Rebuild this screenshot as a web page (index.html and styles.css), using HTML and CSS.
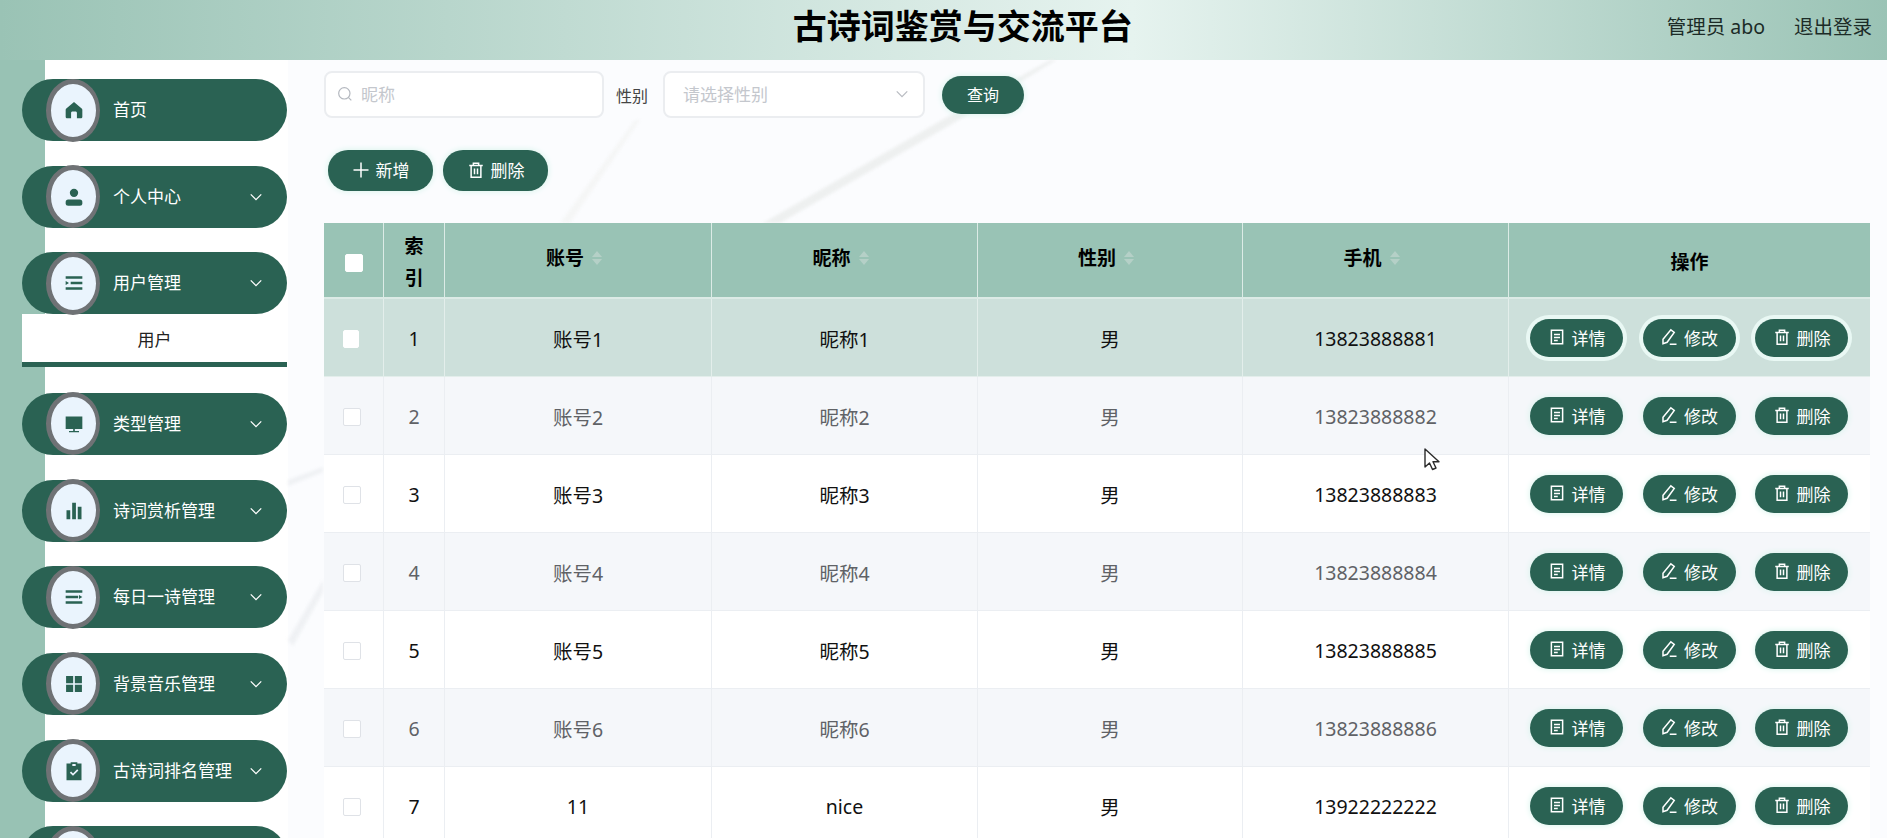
FILE: index.html
```html
<!DOCTYPE html>
<html lang="zh-CN">

<head>
    <meta charset="UTF-8">
    <title>古诗词鉴赏与交流平台</title>
    <link rel="stylesheet" href="styles.css">
</head>

<body>
    <svg class="icon-defs" xmlns="http://www.w3.org/2000/svg">
        <symbol id="i-home" viewBox="0 0 24 24"><path d="M12 2.500 2.800 10.200c-.5.4-.8 1-.8 1.700V20c0 1.100.9 2 2 2h4.500v-6.500c0-1 .7-1.700 1.700-1.700h3.600c1 0 1.700.7 1.700 1.700V22H20c1.100 0 2-.9 2-2v-8.100c0-.7-.3-1.300-.8-1.700z"/></symbol>
        <symbol id="i-user" viewBox="0 0 24 24"><circle cx="12" cy="7" r="5"/><rect x="2" y="15" width="20" height="7.500" rx="3"/></symbol>
        <symbol id="i-indent" viewBox="0 0 24 24"><path d="M2 4h20v3H2zM8 10.500h14v3H8zM2 17h20v3H2zM6 12 2 9.500v5z"/></symbol>
        <symbol id="i-monitor" viewBox="0 0 24 24"><path d="M2 3h20v15H2zM11 18h2v2.500h-2zM6 20.500h12V22H6z"/></symbol>
        <symbol id="i-chart" viewBox="0 0 24 24"><path d="M3 11h4.500v11H3zM9.800 2h4.500v20H9.800zM16.500 7H21v15h-4.500z"/></symbol>
        <symbol id="i-outdent" viewBox="0 0 24 24"><path d="M2 4h20v3H2zM2 10.500h15v3H2zM2 17h20v3H2zM18 9.500l4 2.500-4 2.500z"/></symbol>
        <symbol id="i-grid" viewBox="0 0 24 24"><path d="M2.500 2.500h8.500V11H2.500zM13 2.500h8.500V11H13zM2.500 13H11v8.500H2.500zM13 13h8.500v8.500H13z"/></symbol>
        <symbol id="i-task" viewBox="0 0 24 24"><path d="M8 1.500h8V3h5v20H3V3h5zM10 3.500V6h4V3.500zM10.800 17.800l6.500-6.500-1.500-1.400-5 5-2.300-2.300-1.500 1.400z"/></symbol>
        <symbol id="i-doc" viewBox="0 0 24 24"><path d="M4.500 3h15v18h-15zM8 8.500h8M8 12.500h8M8 16.500h5" fill="none" stroke="currentColor" stroke-width="2"/></symbol>
        <symbol id="i-edit" viewBox="0 0 24 24"><path d="M14.500 2.500l4.500 3.500L9.500 19l-5.500 2L4 15zM13 21.500h9" fill="none" stroke="currentColor" stroke-width="2"/></symbol>
        <symbol id="i-trash" viewBox="0 0 24 24"><path d="M3 6h18M8.500 6V3h7v3M5.500 6v15.500h13V6M10 10v7.500M14 10v7.500" fill="none" stroke="currentColor" stroke-width="2"/></symbol>
        <symbol id="i-plus" viewBox="0 0 24 24"><path d="M12 2v20M2 12h20" fill="none" stroke="currentColor" stroke-width="2"/></symbol>
        <symbol id="i-down" viewBox="0 0 24 24"><path d="M3 7.500l9 9 9-9" fill="none" stroke="currentColor" stroke-width="2.200"/></symbol>
        <symbol id="i-search" viewBox="0 0 24 24"><circle cx="11" cy="11" r="8.500" fill="none" stroke="currentColor" stroke-width="1.800"/><path d="M17 17l4.500 4.500" fill="none" stroke="currentColor" stroke-width="1.800"/></symbol>
    </svg>

    <header class="topbar">
        <h1 class="site-title">古诗词鉴赏与交流平台</h1>
        <div class="user-box">
            <span>管理员 abo</span>
            <span>退出登录</span>
        </div>
    </header>

    <div class="layout">
        <aside class="sidebar">
            <div class="menu-item">
                <span class="menu-circle"><svg class="menu-icon"><use href="#i-home"/></svg></span>
                <span class="menu-label">首页</span>
            </div>
            <div class="menu-item">
                <span class="menu-circle"><svg class="menu-icon"><use href="#i-user"/></svg></span>
                <span class="menu-label">个人中心</span>
                <svg class="menu-arrow"><use href="#i-down"/></svg>
            </div>
            <div class="menu-item open">
                <span class="menu-circle"><svg class="menu-icon"><use href="#i-indent"/></svg></span>
                <span class="menu-label">用户管理</span>
                <svg class="menu-arrow"><use href="#i-down"/></svg>
            </div>
            <div class="submenu-item">用户</div>
            <div class="menu-item">
                <span class="menu-circle"><svg class="menu-icon"><use href="#i-monitor"/></svg></span>
                <span class="menu-label">类型管理</span>
                <svg class="menu-arrow"><use href="#i-down"/></svg>
            </div>
            <div class="menu-item">
                <span class="menu-circle"><svg class="menu-icon"><use href="#i-chart"/></svg></span>
                <span class="menu-label">诗词赏析管理</span>
                <svg class="menu-arrow"><use href="#i-down"/></svg>
            </div>
            <div class="menu-item">
                <span class="menu-circle"><svg class="menu-icon"><use href="#i-outdent"/></svg></span>
                <span class="menu-label">每日一诗管理</span>
                <svg class="menu-arrow"><use href="#i-down"/></svg>
            </div>
            <div class="menu-item">
                <span class="menu-circle"><svg class="menu-icon"><use href="#i-grid"/></svg></span>
                <span class="menu-label">背景音乐管理</span>
                <svg class="menu-arrow"><use href="#i-down"/></svg>
            </div>
            <div class="menu-item">
                <span class="menu-circle"><svg class="menu-icon"><use href="#i-task"/></svg></span>
                <span class="menu-label">古诗词排名管理</span>
                <svg class="menu-arrow"><use href="#i-down"/></svg>
            </div>
            <div class="menu-item">
                <span class="menu-circle"></span>
            </div>
        </aside>

        <main class="content">
            <!-- faint brush strokes of the page background -->
            <svg class="bg-strokes" viewBox="0 0 1599 778" preserveAspectRatio="none">
                <path class="stroke-a" d="M475 163 654 60 762 0 768 0 664 64 492 163Z"/>
                <path class="stroke-b" d="M272 163 347 60 352 60 282 163Z"/>
                <path class="stroke-c" d="M0 580 35 520 35 532 5 586Z"/>
                <path class="stroke-c" d="M0 420 35 407 35 412 0 426Z"/>
            </svg>

            <form class="search-bar">
                <div class="field search-field">
                    <svg class="search-icon"><use href="#i-search"/></svg>
                    <span class="placeholder">昵称</span>
                </div>
                <label class="field-label">性别</label>
                <div class="field select-field">
                    <span class="placeholder">请选择性别</span>
                    <svg class="select-arrow"><use href="#i-down"/></svg>
                </div>
                <button type="button" class="btn btn-query">查询</button>
            </form>

            <div class="toolbar">
                <button type="button" class="btn btn-tool"><svg class="btn-icon"><use href="#i-plus"/></svg>新增</button>
                <button type="button" class="btn btn-tool"><svg class="btn-icon"><use href="#i-trash"/></svg>删除</button>
            </div>

            <table class="data-table">
                <colgroup>
                    <col class="col-check">
                    <col class="col-index">
                    <col class="col-first">
                    <col class="col-data">
                    <col class="col-mid">
                    <col class="col-data">
                    <col class="col-actions">
                </colgroup>
                <thead>
                    <tr>
                        <th><span class="check head-check"></span></th>
                        <th class="index-head">索引</th>
                        <th><span class="sortable">账号<i class="carets"></i></span></th>
                        <th><span class="sortable">昵称<i class="carets"></i></span></th>
                        <th><span class="sortable">性别<i class="carets"></i></span></th>
                        <th><span class="sortable">手机<i class="carets"></i></span></th>
                        <th>操作</th>
                    </tr>
                </thead>
                <tbody>
                    <tr class="row-hover">
                        <td><span class="check"></span></td><td>1</td><td>账号1</td><td>昵称1</td><td>男</td><td>13823888881</td>
                        <td class="actions-cell"><div class="row-actions">
                            <button type="button" class="btn btn-row"><svg class="btn-icon"><use href="#i-doc"/></svg>详情</button>
                            <button type="button" class="btn btn-row"><svg class="btn-icon"><use href="#i-edit"/></svg>修改</button>
                            <button type="button" class="btn btn-row"><svg class="btn-icon"><use href="#i-trash"/></svg>删除</button>
                        </div></td>
                    </tr>
                    <tr class="row-alt">
                        <td><span class="check"></span></td><td>2</td><td>账号2</td><td>昵称2</td><td>男</td><td>13823888882</td>
                        <td class="actions-cell"><div class="row-actions">
                            <button type="button" class="btn btn-row"><svg class="btn-icon"><use href="#i-doc"/></svg>详情</button>
                            <button type="button" class="btn btn-row"><svg class="btn-icon"><use href="#i-edit"/></svg>修改</button>
                            <button type="button" class="btn btn-row"><svg class="btn-icon"><use href="#i-trash"/></svg>删除</button>
                        </div></td>
                    </tr>
                    <tr>
                        <td><span class="check"></span></td><td>3</td><td>账号3</td><td>昵称3</td><td>男</td><td>13823888883</td>
                        <td class="actions-cell"><div class="row-actions">
                            <button type="button" class="btn btn-row"><svg class="btn-icon"><use href="#i-doc"/></svg>详情</button>
                            <button type="button" class="btn btn-row"><svg class="btn-icon"><use href="#i-edit"/></svg>修改</button>
                            <button type="button" class="btn btn-row"><svg class="btn-icon"><use href="#i-trash"/></svg>删除</button>
                        </div></td>
                    </tr>
                    <tr class="row-alt">
                        <td><span class="check"></span></td><td>4</td><td>账号4</td><td>昵称4</td><td>男</td><td>13823888884</td>
                        <td class="actions-cell"><div class="row-actions">
                            <button type="button" class="btn btn-row"><svg class="btn-icon"><use href="#i-doc"/></svg>详情</button>
                            <button type="button" class="btn btn-row"><svg class="btn-icon"><use href="#i-edit"/></svg>修改</button>
                            <button type="button" class="btn btn-row"><svg class="btn-icon"><use href="#i-trash"/></svg>删除</button>
                        </div></td>
                    </tr>
                    <tr>
                        <td><span class="check"></span></td><td>5</td><td>账号5</td><td>昵称5</td><td>男</td><td>13823888885</td>
                        <td class="actions-cell"><div class="row-actions">
                            <button type="button" class="btn btn-row"><svg class="btn-icon"><use href="#i-doc"/></svg>详情</button>
                            <button type="button" class="btn btn-row"><svg class="btn-icon"><use href="#i-edit"/></svg>修改</button>
                            <button type="button" class="btn btn-row"><svg class="btn-icon"><use href="#i-trash"/></svg>删除</button>
                        </div></td>
                    </tr>
                    <tr class="row-alt">
                        <td><span class="check"></span></td><td>6</td><td>账号6</td><td>昵称6</td><td>男</td><td>13823888886</td>
                        <td class="actions-cell"><div class="row-actions">
                            <button type="button" class="btn btn-row"><svg class="btn-icon"><use href="#i-doc"/></svg>详情</button>
                            <button type="button" class="btn btn-row"><svg class="btn-icon"><use href="#i-edit"/></svg>修改</button>
                            <button type="button" class="btn btn-row"><svg class="btn-icon"><use href="#i-trash"/></svg>删除</button>
                        </div></td>
                    </tr>
                    <tr>
                        <td><span class="check"></span></td><td>7</td><td>11</td><td>nice</td><td>男</td><td>13922222222</td>
                        <td class="actions-cell"><div class="row-actions">
                            <button type="button" class="btn btn-row"><svg class="btn-icon"><use href="#i-doc"/></svg>详情</button>
                            <button type="button" class="btn btn-row"><svg class="btn-icon"><use href="#i-edit"/></svg>修改</button>
                            <button type="button" class="btn btn-row"><svg class="btn-icon"><use href="#i-trash"/></svg>删除</button>
                        </div></td>
                    </tr>
                </tbody>
            </table>
        </main>
    </div>

    <!-- mouse pointer caught in the screenshot -->
    <svg class="cursor" viewBox="0 0 16 23"><path d="M1 1v18l4.500-4 3 6.500 3.500-1.500-3-6.300h6z"/></svg>
</body>

</html>
```

FILE: styles.css
```css
* {
    box-sizing: border-box;
}

html,
body {
    height: 100%;
}

body {
    margin: 0;
    overflow: hidden;
    background: #fff;
    color: #111;
    font-family: "Noto Sans", "Noto Sans CJK SC", sans-serif;
}

.icon-defs {
    display: none;
}

.topbar {
    display: flex;
    align-items: center;
    height: 60px;
    background: linear-gradient(to right, #9ac3b5 0%, #e6f3ef 60%, #9ac3b5 100%);
}

.site-title {
    flex: 1;
    margin: 0;
    padding-left: 259px;
    padding-bottom: 8px;
    text-align: center;
    font-size: 34px;
    font-weight: 700;
    line-height: 50px;
    color: #000;
}

.user-box {
    display: flex;
    gap: 29px;
    padding-right: 15px;
    padding-bottom: 10px;
    font-size: 19.500px;
    color: #1c2b27;
}

.layout {
    display: flex;
    height: calc(100% - 60px);
}

.sidebar {
    flex: none;
    width: 288px;
    padding: 19px 0 0 22px;
    background: linear-gradient(to right, #98c2b4 45px, #fff 45px);
}

.menu-item {
    display: flex;
    align-items: center;
    width: 265px;
    height: 62px;
    margin-bottom: 24.700px;
    border-radius: 31px;
    background: #2a6253;
    color: #fff;
}

.menu-item.open {
    margin-bottom: 0;
}

.menu-circle {
    display: flex;
    flex: none;
    align-items: center;
    justify-content: center;
    width: 54px;
    height: 63px;
    margin-left: 24px;
    border: 5px solid #6f7275;
    border-right-width: 4px;
    border-radius: 50%;
    background: #eaf4fd;
    color: #2a6253;
}

.menu-icon {
    width: 20px;
    height: 20px;
    fill: currentColor;
}

.menu-label {
    flex: 1;
    margin-left: 13px;
    padding-bottom: 3px;
    font-size: 17px;
    white-space: nowrap;
}

.menu-arrow {
    flex: none;
    width: 14px;
    height: 14px;
    margin-right: 24px;
    color: #fff;
}

.submenu-item {
    width: 265px;
    height: 53px;
    margin-bottom: 25.500px;
    padding-top: 11px;
    border-bottom: 5px solid #2a6253;
    background: #fff;
    text-align: center;
    font-size: 17px;
    line-height: 30px;
    color: #222;
}

.content {
    position: relative;
    flex: 1;
    min-width: 0;
    padding: 11px 17px 0 36px;
    background: #fbfcfe;
}

.bg-strokes {
    position: absolute;
    top: 0;
    left: 0;
    width: 100%;
    height: 100%;
    filter: blur(1.500px);
}

.stroke-a {
    fill: #eef0f0;
}

.stroke-b {
    fill: #f5f6f6;
}

.stroke-c {
    fill: #eff1f4;
}

.search-bar,
.toolbar,
.data-table {
    position: relative;
}

.search-bar {
    display: flex;
    align-items: center;
    height: 47px;
}

.field {
    display: flex;
    align-items: center;
    height: 47px;
    padding-bottom: 2px;
    border: 2px solid #ebedf0;
    border-radius: 8px;
    background: #fff;
}

.search-field {
    width: 280px;
    padding-left: 11px;
}

.search-icon {
    width: 16px;
    height: 16px;
    margin-right: 8px;
    color: #b4b8bf;
}

.placeholder {
    font-size: 17px;
    color: #c4c7cd;
}

.field-label {
    margin: 0 15px 0 12px;
    font-size: 16px;
    color: #444;
}

.select-field {
    justify-content: space-between;
    width: 262px;
    padding: 0 14px 2px 18px;
}

.select-arrow {
    width: 14px;
    height: 14px;
    color: #b9bcc2;
}

.btn {
    display: inline-flex;
    align-items: center;
    justify-content: center;
    padding: 0 0 2px;
    border: none;
    border-radius: 20px;
    background: #2a6253;
    color: #fff;
    font-family: inherit;
    box-shadow: 0 0 6px #d3f3ea;
}

.btn-query {
    width: 82px;
    height: 38px;
    margin-left: 17px;
    font-size: 16px;
}

.toolbar {
    display: flex;
    gap: 10px;
    margin: 32px 0 32px 4px;
}

.btn-tool {
    width: 105px;
    height: 41px;
    font-size: 17px;
}

.btn-icon {
    flex: none;
    width: 18px;
    height: 18px;
    margin-right: 6px;
}

.data-table {
    width: 1546px;
    border-spacing: 0;
    table-layout: fixed;
    background: #fff;
}

.col-check {
    width: 60px;
}

.col-index {
    width: 61px;
}

.col-first {
    width: 267px;
}

.col-data {
    width: 266px;
}

.col-mid {
    width: 265px;
}

.col-actions {
    width: 361px;
}

.data-table th {
    height: 76px;
    padding: 3px 0 0;
    border-right: 1px solid #dcebe6;
    border-bottom: 2px solid #dcebe6;
    background: #99c3b5;
    font-size: 19px;
    font-weight: 700;
    line-height: 32px;
    color: #000;
}

.data-table th:last-child,
.data-table td:last-child {
    border-right: none;
}

.data-table th.index-head {
    padding: 3px 12px 0;
}

.data-table td {
    height: 78px;
    padding: 2px 0 0;
    border-right: 1px solid #ebeef2;
    border-bottom: 1px solid #ebeef2;
    text-align: center;
    font-size: 19.500px;
    color: #111;
}

.data-table td.actions-cell {
    padding: 0;
}

.row-alt td {
    background: #f5f7fa;
    color: #606266;
}

.row-hover td {
    background: #cde0db;
    border-color: #e3eeeb;
}

.sortable {
    display: inline-flex;
    align-items: center;
    gap: 8px;
    margin-right: 8px;
    margin-bottom: 7px;
}

/* two small triangles of the sort control */
.carets {
    display: flex;
    flex-direction: column;
    gap: 2px;
}

.carets::before,
.carets::after {
    content: "";
    border-left: 5px solid transparent;
    border-right: 5px solid transparent;
}

.carets::before {
    border-bottom: 6px solid #b5d0c7;
}

.carets::after {
    border-top: 6px solid #b5d0c7;
}

.check {
    display: inline-block;
    width: 18px;
    height: 18px;
    margin: 0 3px 3px 0;
    border: 1px solid #dfe2e7;
    border-radius: 2px;
    background: #fff;
    vertical-align: middle;
}

.head-check {
    margin: 0;
    border-color: #fff;
}

.row-hover .check {
    width: 16px;
    margin-right: 5px;
    border-color: #fff;
}

.row-actions {
    display: flex;
    gap: 19.500px;
    padding-left: 21px;
}

.btn-row {
    width: 93px;
    height: 38px;
    padding-bottom: 1px;
    font-size: 17px;
}

.row-hover .btn-row {
    box-shadow: 0 0 0 4px #e9f8f4;
}

.cursor {
    position: absolute;
    top: 448px;
    left: 1424px;
    width: 16px;
    height: 23px;
    fill: #fff;
    stroke: #2b2b2b;
    stroke-width: 1.400;
    stroke-linejoin: round;
}
```
